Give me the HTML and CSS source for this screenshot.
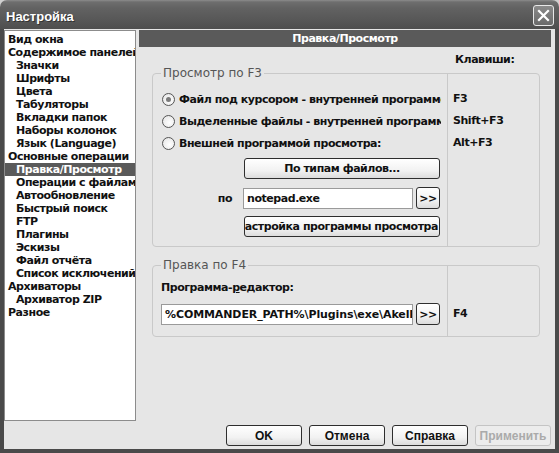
FILE: index.html
```html
<!DOCTYPE html>
<html lang="ru">
<head>
  <meta charset="UTF-8">
  <title>Настройка</title>
  <link rel="stylesheet" href="styles.css">
</head>
<body>
  <div class="window">
    <div class="titlebar">
      <span class="title">Настройка</span>
      <span class="close">
        <svg width="13" height="13" viewBox="0 0 13 13"><path d="M2 2 L11 11 M11 2 L2 11" stroke="#fff" stroke-width="2.2" stroke-linecap="square"/></svg>
      </span>
    </div>

    <div class="frame">
      <div class="main">
        <ul class="tree">
          <li>Вид окна</li>
          <li>Содержимое панелей</li>
          <li class="sub">Значки</li>
          <li class="sub">Шрифты</li>
          <li class="sub">Цвета</li>
          <li class="sub">Табуляторы</li>
          <li class="sub">Вкладки папок</li>
          <li class="sub">Наборы колонок</li>
          <li class="sub">Язык (Language)</li>
          <li>Основные операции</li>
          <li class="sub selected">Правка/Просмотр</li>
          <li class="sub">Операции с файлами</li>
          <li class="sub">Автообновление</li>
          <li class="sub">Быстрый поиск</li>
          <li class="sub">FTP</li>
          <li class="sub">Плагины</li>
          <li class="sub">Эскизы</li>
          <li class="sub">Файл отчёта</li>
          <li class="sub">Список исключений</li>
          <li>Архиваторы</li>
          <li class="sub">Архиватор ZIP</li>
          <li>Разное</li>
        </ul>

        <div class="pane">
          <div class="pane-head">Правка/Просмотр</div>
          <div class="keys-head">Клавиши:</div>

          <div class="group group-view">
            <span class="legend">Просмотр по F3</span>
            <div class="group-main">
              <div class="radio-row">
                <span class="radio checked"></span>
                <span class="radio-text">Файл под курсором - внутренней программой</span>
              </div>
              <div class="radio-row">
                <span class="radio"></span>
                <span class="radio-text">Выделенные файлы - внутренней программой</span>
              </div>
              <div class="radio-row">
                <span class="radio"></span>
                <span class="radio-text">Внешней программой просмотра:</span>
              </div>
              <button class="btn wide">По типам файлов...</button>
              <div class="field-row">
                <span class="field-label">по</span>
                <div class="input input-short">notepad.exe</div>
                <button class="btn browse">&gt;&gt;</button>
              </div>
              <button class="btn wide clipped"><span>Настройка программы просмотра</span></button>
            </div>
            <div class="group-keys">
              <div class="key">F3</div>
              <div class="key">Shift+F3</div>
              <div class="key">Alt+F3</div>
            </div>
          </div>

          <div class="group group-edit">
            <span class="legend">Правка по F4</span>
            <div class="group-main">
              <div class="field-caption">Программа-<u>р</u>едактор:</div>
              <div class="field-row left">
                <div class="input input-long">%COMMANDER_PATH%\Plugins\exe\AkelPad.exe</div>
                <button class="btn browse">&gt;&gt;</button>
              </div>
            </div>
            <div class="group-keys">
              <div class="key">F4</div>
            </div>
          </div>
        </div>
      </div>

      <div class="buttons">
        <button class="btn dlg">OK</button>
        <button class="btn dlg">Отмена</button>
        <button class="btn dlg">Справка</button>
        <button class="btn dlg disabled">Применить</button>
      </div>
    </div>
  </div>
</body>
</html>
```

FILE: styles.css
```css
:root {
  --face: #e6e6e6;
  --dark: #5a5a5a;
  --frame: #4a4a4a;
  --line: #c9c9c9;
  --ui-font: "DejaVu Sans", "Liberation Sans", sans-serif;
}

* {
  box-sizing: border-box;
}

body {
  margin: 0;
  width: 559px;
  height: 453px;
  background: #cfcfcf;
  font-family: var(--ui-font);
  font-size: 11px;
  font-weight: bold;
  letter-spacing: -0.45px;
  color: #111;
}

.window {
  width: 559px;
  height: 453px;
  display: flex;
  flex-direction: column;
}

/* title bar */
.titlebar {
  height: 29px;
  flex: none;
  display: flex;
  align-items: center;
  justify-content: space-between;
  padding: 2px 5px 0 6px;
  border-radius: 7px 7px 0 0;
  background: linear-gradient(#8c8c8c 0, #6e6e6e 2px, #626262 8px, #575757 20px, #4e4e4e 29px);
}

.title {
  color: #fff;
  font-size: 13px;
  letter-spacing: 0;
  padding-top: 2px;
  text-shadow: 1px 1px 0 #333;
  font-family: "Liberation Sans", sans-serif;
}

.close {
  width: 21px;
  height: 21px;
  display: flex;
  align-items: center;
  justify-content: center;
  border: 1px solid #e8e8e8;
  border-radius: 3px;
  background: linear-gradient(#8a8a8a, #6a6a6a);
}

/* window body */
.frame {
  flex: 1;
  display: flex;
  flex-direction: column;
  background: var(--face);
  border: 4px solid var(--frame);
  border-top: none;
  padding: 1px 4px 3px 0;
}

.main {
  height: 391px;
  display: flex;
  gap: 3px;
}

.tree {
  list-style: none;
  margin: 0;
  width: 132px;
  padding: 2px 0 0;
  background: #fff;
  border: 1px solid #8c8c8c;
  overflow: hidden;
}

.tree li {
  height: 13px;
  line-height: 13px;
  padding-left: 3px;
  white-space: nowrap;
}

.tree li.sub {
  padding-left: 11px;
}

.tree li.selected {
  background: var(--dark);
  color: #fff;
}

.pane {
  flex: 1;
}

.pane-head {
  height: 17px;
  line-height: 17px;
  background: var(--dark);
  color: #fff;
  text-align: center;
}

.keys-head {
  height: 26px;
  line-height: 26px;
  padding-left: 316px;
}

/* group boxes */
.group {
  position: relative;
  width: 388px;
  margin-left: 13px;
  display: flex;
  border: 1px solid var(--line);
  border-radius: 4px;
}

.group-edit {
  margin-top: 18px;
}

.legend {
  position: absolute;
  top: -8px;
  left: 8px;
  padding: 0 2px;
  background: var(--face);
  color: #555;
  font-size: 12px;
  font-weight: normal;
  letter-spacing: 0;
  line-height: 15px;
}

.group-main {
  width: 294px;
  display: flex;
  flex-direction: column;
  padding: 14px 0 9px 9px;
}

.group-edit .group-main {
  padding: 14px 0 11px 8px;
}

.group-keys {
  width: 92px;
  border-left: 1px solid var(--line);
  padding: 14px 0 0 5px;
}

.group-edit .group-keys {
  padding-top: 37px;
}

.key {
  height: 22px;
  line-height: 22px;
}

.radio-row {
  width: 279px;
  height: 22px;
  display: flex;
  align-items: center;
  gap: 4px;
  overflow: hidden;
  white-space: nowrap;
}

.radio {
  flex: none;
  width: 13px;
  height: 13px;
  border-radius: 50%;
  border: 1px solid #555;
  background: radial-gradient(circle at 60% 60%, #fff, #e2e2e2);
  display: flex;
  align-items: center;
  justify-content: center;
}

.radio.checked::after {
  content: "";
  width: 5px;
  height: 5px;
  border-radius: 50%;
  background: #7a7a7a;
}

.field-caption {
  height: 16px;
  line-height: 16px;
  margin-bottom: 7px;
}

.field-row {
  height: 22px;
  display: flex;
  align-items: center;
  justify-content: flex-end;
  gap: 3px;
  padding-right: 7px;
  margin-top: 8px;
}

.field-row.left {
  justify-content: flex-start;
  margin-top: 0;
}

.field-label {
  margin-right: 8px;
}

.input {
  height: 21px;
  line-height: 19px;
  padding: 0 3px;
  background: #fff;
  border: 1px solid #9a9a9a;
  white-space: nowrap;
  overflow: hidden;
}

.input-short {
  width: 170px;
}

.input-long {
  width: 253px;
  letter-spacing: -0.1px;
}

/* buttons */
.btn {
  font: inherit;
  letter-spacing: inherit;
  color: #111;
  height: 21px;
  padding: 0;
  border: 1px solid #2e2e2e;
  border-radius: 3px;
  background: linear-gradient(#ffffff, #f2f2f2 60%, #dcdcdc);
  display: flex;
  align-items: center;
  justify-content: center;
  white-space: nowrap;
  overflow: hidden;
}

.btn.wide {
  width: 196px;
  margin-left: 82px;
  margin-top: 4px;
}

.btn.clipped {
  margin-top: 7px;
  justify-content: flex-end;
  padding-right: 1px;
}

.btn.browse {
  width: 24px;
  height: 22px;
}

.buttons {
  display: flex;
  justify-content: flex-end;
  gap: 7px;
  margin-top: 4px;
}

.btn.dlg {
  width: 76px;
  font-family: "Liberation Sans", sans-serif;
  font-size: 12px;
  letter-spacing: 0;
}

.btn.dlg.disabled {
  color: #aaa;
  border-color: #c4c4c4;
  background: #ececec;
}
```
